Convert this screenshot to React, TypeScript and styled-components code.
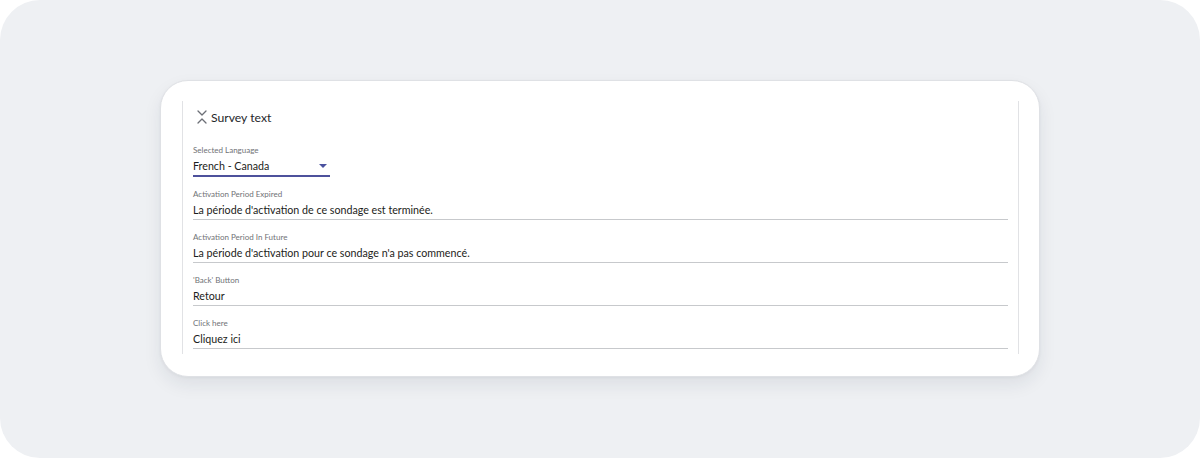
import React from 'react';
import styled, { createGlobalStyle } from 'styled-components';

const GlobalStyle = createGlobalStyle`
  html, body {
    margin: 0;
    padding: 0;
    background: #ffffff;
  }
  body {
    font-family: Lato, "Open Sans", sans-serif;
  }
`;

const Frame = styled.div`
  width: 1200px;
  height: 458px;
  box-sizing: border-box;
  padding: 80px 160px 81px;
  background: #eef0f3;
  border-radius: 40px;
`;

const Card = styled.div`
  height: 100%;
  box-sizing: border-box;
  padding: 20px 20px 22px 21px;
  background: #ffffff;
  border: 1px solid #dfe1e5;
  border-radius: 28px;
  box-shadow: 0 8px 18px rgba(30, 40, 60, 0.08), 0 1px 3px rgba(30, 40, 60, 0.05);
  overflow: hidden;
`;

const Panel = styled.div`
  height: 100%;
  box-sizing: border-box;
  border-left: 1px solid #e1e2e5;
  border-right: 1px solid #e1e2e5;
  padding: 6px 10px 0 10px;
  overflow: hidden;
`;

const TitleRow = styled.div`
  display: flex;
  align-items: center;
  gap: 3px;
  height: 20px;
  padding-left: 3px;
  margin-bottom: 18px;
`;

const Title = styled.span`
  font-size: 12.2px;
  color: #25272b;
`;

const Fields = styled.div`
  display: flex;
  flex-direction: column;
  gap: 12px;
`;

const Field = styled.div<{ $narrow?: boolean }>`
  width: ${(p) => (p.$narrow ? '137px' : '100%')};
`;

const Label = styled.div`
  font-size: 8px;
  line-height: 10px;
  color: #707276;
  margin-bottom: 3px;
`;

const Value = styled.div<{ $active?: boolean }>`
  display: flex;
  align-items: center;
  justify-content: space-between;
  font-size: 10.7px;
  line-height: 16px;
  color: #1c1d20;
  padding-bottom: 1px;
  border-bottom: ${(p) => (p.$active ? '2px solid #4d519c' : '1px solid #c7c9cc')};
`;

const Caret = styled.span`
  width: 0;
  height: 0;
  margin-right: 3px;
  border-left: 4px solid transparent;
  border-right: 4px solid transparent;
  border-top: 4px solid #4a529f;
`;

const CollapseIcon = () => (
  <svg width="12" height="16" viewBox="0 0 12 16" fill="none" stroke="#6c6f76" strokeWidth="1.3" strokeLinecap="round" strokeLinejoin="round">
    <path d="M2 2 L6 6 L10 2" />
    <path d="M2 14 L6 10 L10 14" />
  </svg>
);

const fields = [
  { label: 'Activation Period Expired', value: "La période d'activation de ce sondage est terminée." },
  { label: 'Activation Period In Future', value: "La période d'activation pour ce sondage n'a pas commencé." },
  { label: "'Back' Button", value: 'Retour' },
  { label: 'Click here', value: 'Cliquez ici' },
];

export default function App() {
  return (
    <>
      <GlobalStyle />
      <Frame>
        <Card>
          <Panel>
            <TitleRow>
              <CollapseIcon />
              <Title>Survey text</Title>
            </TitleRow>
            <Fields>
              <Field $narrow>
                <Label>Selected Language</Label>
                <Value $active>
                  French - Canada
                  <Caret />
                </Value>
              </Field>
              {fields.map((f) => (
                <Field key={f.label}>
                  <Label>{f.label}</Label>
                  <Value>{f.value}</Value>
                </Field>
              ))}
            </Fields>
          </Panel>
        </Card>
      </Frame>
    </>
  );
}
